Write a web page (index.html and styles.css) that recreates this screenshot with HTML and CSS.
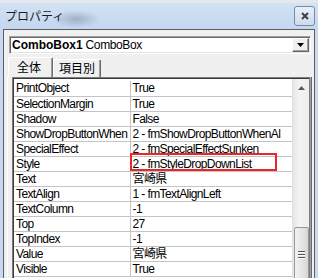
FILE: index.html
```html
<!DOCTYPE html>
<html lang="ja">
<head>
  <meta charset="UTF-8">
  <title>プロパティ</title>
  <link rel="stylesheet" href="styles.css">
</head>
<body>
  <div class="strip"></div>
  <div class="titlebar">
    <span class="title">プロパティ</span>
    <span class="close">
      <svg width="8" height="8" viewBox="0 0 8 8"><path d="M1 1L7 7M7 1L1 7" stroke="#3c4048" stroke-width="2"/></svg>
    </span>
  </div>

  <div class="frame">
    <div class="combo">
      <span class="combo-text"><b>ComboBox1</b> ComboBox</span>
      <span class="combo-btn">
        <svg width="7" height="4" viewBox="0 0 7 4"><path d="M0 0H7L3.5 4Z" fill="#000"/></svg>
      </span>
    </div>

    <div class="tabs">
      <span class="tab active">全体</span>
      <span class="tab">項目別</span>
    </div>

    <div class="page">
      <div class="grid">
        <div class="list">
          <table class="props">
            <tbody>
              <tr><td>PrintObject</td><td>True</td></tr>
              <tr><td>SelectionMargin</td><td>True</td></tr>
              <tr><td>Shadow</td><td>False</td></tr>
              <tr><td>ShowDropButtonWhen</td><td>2 - fmShowDropButtonWhenAl</td></tr>
              <tr><td>SpecialEffect</td><td>2 - fmSpecialEffectSunken</td></tr>
              <tr><td>Style</td><td class="marked">2 - fmStyleDropDownList<span class="mark"></span></td></tr>
              <tr><td>Text</td><td>宮崎県</td></tr>
              <tr><td>TextAlign</td><td>1 - fmTextAlignLeft</td></tr>
              <tr><td>TextColumn</td><td>-1</td></tr>
              <tr><td>Top</td><td>27</td></tr>
              <tr><td>TopIndex</td><td>-1</td></tr>
              <tr><td>Value</td><td>宮崎県</td></tr>
              <tr><td>Visible</td><td>True</td></tr>
            </tbody>
          </table>
        </div>
        <div class="scrollbar">
          <span class="sb-arrow">
            <svg width="7" height="4" viewBox="0 0 7 4"><path d="M3.5 0L7 4H0Z" fill="#5a5a5a"/></svg>
          </span>
          <span class="sb-thumb">
            <span class="grip"></span><span class="grip"></span><span class="grip"></span>
          </span>
        </div>
      </div>
    </div>
  </div>
</body>
</html>
```

FILE: styles.css
```css
* { box-sizing: border-box; }
body { margin: 0; width: 318px; height: 278px; overflow: hidden; background: #c6d9f0; font-family: "Liberation Sans", "Noto Sans CJK JP", sans-serif; font-size: 12px; color: #000; }

/* Pasek tytułu */
.strip { height: 3px; background: #e4e7eb; }
.titlebar { height: 26px; display: flex; align-items: center; justify-content: space-between; padding: 0 3px 0 5px;
  background: radial-gradient(ellipse 24px 9px at 76px 16px, rgba(110,125,150,.45), rgba(110,125,150,0)), linear-gradient(#d3e2f4, #c3d7ef); }
.title { font-family: "Noto Sans CJK JP", sans-serif; font-size: 12px; color: #1c1c1c; line-height: 14px; }
.close { width: 21px; height: 20px; margin-top: -1px; border: 1px solid #7a8aa2; border-radius: 3px; background: linear-gradient(#e9f0f9, #cddbee); display: flex; align-items: center; justify-content: center; }

/* Ramka okna */
.frame { margin: 0 3px; height: 260px; border: 1px solid #5e5e5e; border-bottom: 0; background: #f0f0f0; padding: 6px 3px 0 5px; }

.combo { height: 18px; display: flex; background: #fff; border: 1px solid; border-color: #a0a0a0 #fff #fff #a0a0a0; box-shadow: inset 1px 1px #696969, inset -1px -1px #e3e3e3; padding: 1px 1px 1px 2px; }
.combo-text { flex: 1; line-height: 14px; letter-spacing: -0.4px; white-space: nowrap; overflow: hidden; }
.combo-text b { letter-spacing: 0; }
.combo-btn { width: 17px; display: flex; align-items: center; justify-content: center; background: #f0f0f0; border: 1px solid; border-color: #fff #696969 #696969 #fff; box-shadow: inset -1px -1px #a0a0a0; }

/* Zakładki */
.tabs { display: flex; align-items: flex-end; height: 23px; margin-left: -1px; padding-top: 3px; }
.tab { height: 18px; width: 48px; padding-left: 5px; font-family: "Noto Sans CJK JP", sans-serif; font-size: 12px; line-height: 16px; border: 1px solid; border-bottom: 0; border-color: #fff #696969 #fff #fff; box-shadow: inset -1px 0 #a0a0a0; border-radius: 2px 2px 0 0; }
.tab.active { height: 20px; width: 45px; padding-left: 8px; line-height: 18px; }

.page { margin: 0 -1px 0 -2px; height: 210px; border-left: 1px solid #fff; border-right: 1px solid #696969; box-shadow: inset -1px 0 #a0a0a0; padding: 0 1px 0 4px; }

/* Siatka właściwości */
.grid { display: flex; height: 210px; background: #fff; border: 1px solid #7c7c7c; border-bottom: 0; box-shadow: inset 1px 1px #3a3a3a; padding: 1px 0 0 1px; }
.list { flex: 1; min-width: 0; overflow: hidden; }
.props { width: 100%; table-layout: fixed; border-collapse: collapse; margin-top: 2px; }
.props td { height: 15px; padding: 0 0 0 2px; line-height: 14px; white-space: nowrap; overflow: hidden; border-bottom: 1px solid #c4c4c4; letter-spacing: -0.6px; }
.props td:first-child { width: 116px; border-right: 1px solid #c4c4c4; }
.marked { position: relative; overflow: visible !important; }
.mark { position: absolute; left: -1px; top: -4px; width: 147px; height: 18px; border: 2px solid #e8262b; }

.scrollbar { width: 17px; flex: none; display: flex; flex-direction: column; align-items: center; background: linear-gradient(90deg, #e6e6e6, #f4f4f4 40%, #ededed); border-left: 1px solid #e0e0e0; }
.sb-arrow { height: 17px; display: flex; align-items: center; justify-content: center; }
.sb-thumb { width: 15px; height: 54px; margin-top: 131px; border: 1px solid #979797; border-radius: 2px; background: linear-gradient(90deg, #f2f2f2, #e4e4e4 55%, #d6d6d6); display: flex; flex-direction: column; align-items: center; justify-content: center; gap: 2px; }
.grip { width: 7px; height: 1px; background: #555; box-shadow: 0 1px #fff; }
```
